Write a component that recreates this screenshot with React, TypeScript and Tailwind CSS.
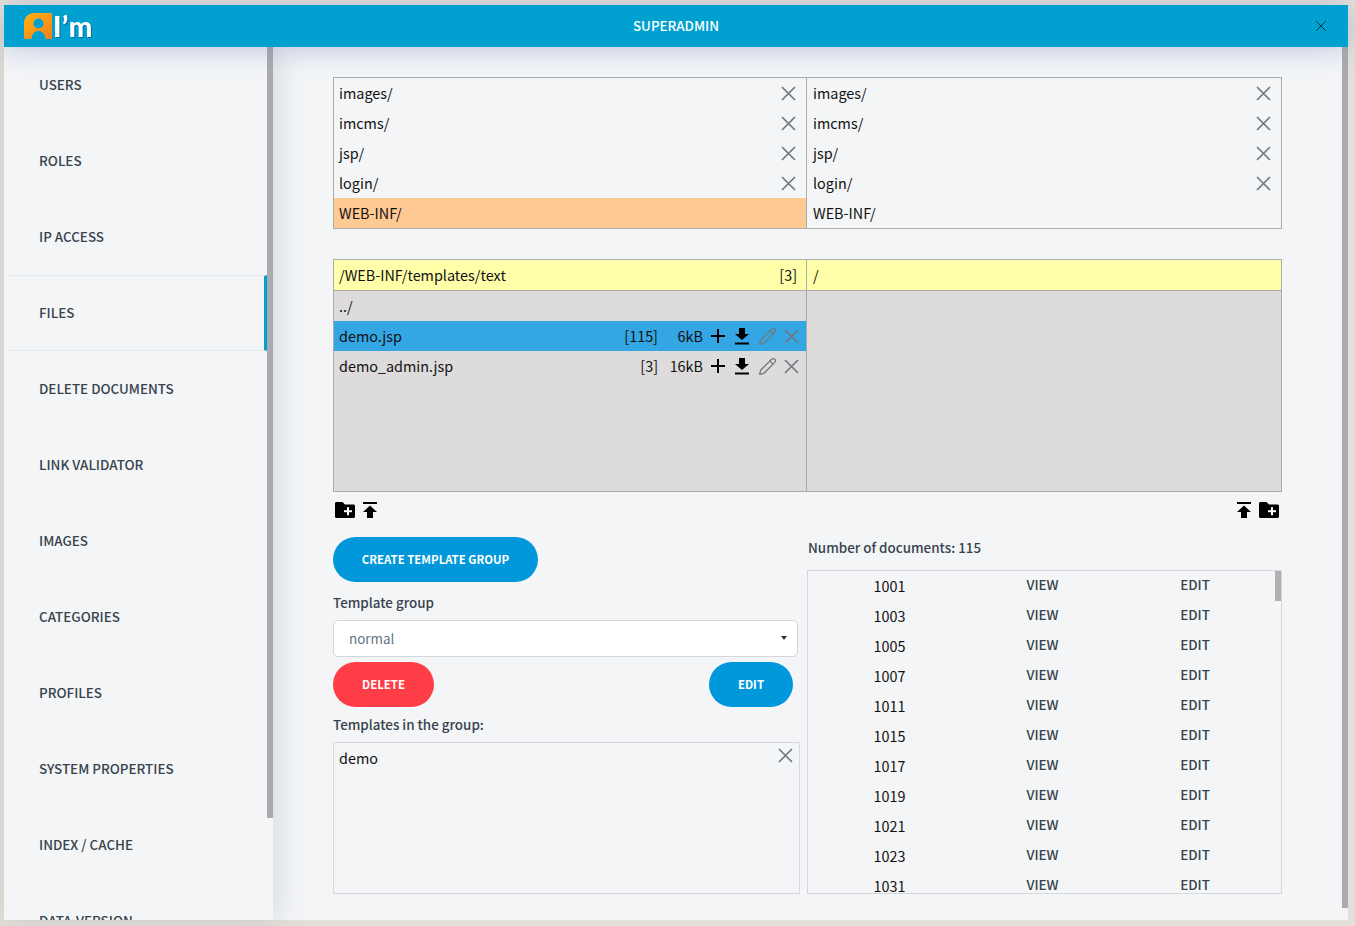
import { Pencil } from 'lucide-react';

const font = "font-['Noto_Sans_CJK_SC','Noto_Sans',sans-serif]";

const menu = [
	'USERS',
	'ROLES',
	'IP ACCESS',
	'FILES',
	'DELETE DOCUMENTS',
	'LINK VALIDATOR',
	'IMAGES',
	'CATEGORIES',
	'PROFILES',
	'SYSTEM PROPERTIES',
	'INDEX / CACHE',
	'DATA-VERSION',
];

const rootDirs = ['images/', 'imcms/', 'jsp/', 'login/'];
const docs = ['1001', '1003', '1005', '1007', '1011', '1015', '1017', '1019', '1021', '1023', '1031'];

function Logo() {
	return (
		<div className="flex items-center h-full pl-5">
			<svg width="28" height="26" viewBox="0 0 28 26" className="mt-[-1px]">
				<defs>
					<linearGradient id="logoGrad" x1="0" y1="0" x2="1" y2="1">
						<stop offset="0%" stopColor="#ffb310" />
						<stop offset="100%" stopColor="#f57f1e" />
					</linearGradient>
				</defs>
				<path d="M10 0H26.5C27.4 0 28 .6 28 1.5V26H21.5C21 21 18.5 18 14.5 18C10.5 18 8 21 7.5 26H1.5C.6 26 0 25.4 0 24.5V10C0 4.5 4.5 0 10 0Z" fill="url(#logoGrad)" />
				<circle cx="14.5" cy="10.5" r="5" fill="#00a1d0" />
				<path d="M10.5 26C10.8 22.5 12 20.5 14.5 20.5C17 20.5 18.2 22.5 18.5 26Z" fill="#00a1d0" />
			</svg>
			<span className="font-['Lato',sans-serif] font-black text-[28px] leading-[27px] text-white ml-px tracking-[0.5px] mt-[1px] drop-shadow-[1px_1px_0_rgba(0,60,90,0.5)]">
				I’m
			</span>
		</div>
	);
}

function CloseIcon({ size = 15, color = '#6f7a80', width = 1.7 }: { size?: number; color?: string; width?: number }) {
	return (
		<svg width={size} height={size} viewBox={`0 0 ${size} ${size}`} fill="none" stroke={color} strokeWidth={width} className="shrink-0">
			<path d={`M1 1L${size - 1} ${size - 1}M${size - 1} 1L1 ${size - 1}`} />
		</svg>
	);
}

function PlusIcon() {
	return (
		<svg width="14" height="14" viewBox="0 0 14 14" fill="#000" className="shrink-0">
			<rect x="0" y="6" width="14" height="2" />
			<rect x="6" y="0" width="2" height="14" />
		</svg>
	);
}

function DirColumn({ highlight, className }: { highlight: boolean; className: string }) {
	return (
		<div className={className}>
			{rootDirs.map((dir) => (
				<div key={dir} className={`h-[30px] flex items-center justify-between pr-[10px] ${highlight ? 'pl-[5px]' : 'pl-[6px]'}`}>
					<span>{dir}</span>
					<CloseIcon />
				</div>
			))}
			<div className={`h-[30px] flex items-center ${highlight ? 'pl-[5px] bg-[#ffc993]' : 'pl-[6px]'}`}>WEB-INF/</div>
		</div>
	);
}

function DownloadIcon() {
	return (
		<svg width="16" height="17" viewBox="0 0 16 17" fill="#000" className="shrink-0">
			<path d="M5 0H11V6H15L8 12L1 6H5Z" />
			<rect x="1" y="14.5" width="14" height="2" />
		</svg>
	);
}

function UploadIcon() {
	return (
		<svg width="14" height="16" viewBox="0 0 14 16" fill="#000">
			<rect x="0" y="0" width="14" height="2" />
			<path d="M7 3.5L14 10H10V16H4V10H0Z" />
		</svg>
	);
}

function FolderPlus() {
	return (
		<svg width="20" height="16" viewBox="0 0 20 16">
			<path d="M1.5 0H7.5L10 2.5H18.5C19.4 2.5 20 3.1 20 4V14.5C20 15.4 19.4 16 18.5 16H1.5C.6 16 0 15.4 0 14.5V1.5C0 .6.6 0 1.5 0Z" fill="#000" />
			<rect x="9" y="8.2" width="8" height="2" fill="#fff" />
			<rect x="12" y="5.2" width="2" height="8" fill="#fff" />
		</svg>
	);
}

function FileRow({ name, usage, size, selected }: { name: string; usage: string; size: string; selected?: boolean }) {
	return (
		<div className={`h-[30px] flex items-center pl-[5px] pr-[7px] ${selected ? 'bg-[#34a6e3]' : ''}`}>
			<span className="flex-1">{name}</span>
			<span>{usage}</span>
			<span className="w-[45px] text-right mr-[8px]">{size}</span>
			<PlusIcon />
			<span className="ml-[9px] mr-[8px] flex"><DownloadIcon /></span>
			<Pencil className="w-[19px] h-[19px] text-[#6f7a80]" strokeWidth={1.6} />
			<span className="ml-[7px] flex"><CloseIcon /></span>
		</div>
	);
}

export default function App() {
	return (
		<div className={`h-[926px] overflow-hidden bg-[#e3e0da] pt-[5px] pl-1 pr-[7px] pb-[6px] ${font}`}>
			<div className="h-full flex flex-col bg-[#f3f5f7]">
				{/* Top bar */}
				<header className="relative z-20 h-[42px] shrink-0 bg-[#00a1d0] shadow-[0_2px_28px_rgba(110,125,175,0.4)] flex items-center">
					<div className="w-[300px]"><Logo /></div>
					<div className="flex-1 text-center text-white text-[13.4px] font-medium -mt-[1px]">SUPERADMIN</div>
					<div className="w-[300px] flex justify-end pr-[21px] -mt-[1px]">
						<CloseIcon size={12} color="#04384c" width={1} />
					</div>
				</header>

				<div className="flex flex-1 min-h-0">
					{/* Sidebar */}
					<aside className="relative z-10 w-[269px] shrink-0 flex overflow-hidden bg-[#f3f5f7] shadow-[4px_0_28px_rgba(110,115,130,0.22)]">
						<nav className="w-[263px] shrink-0">
							{menu.map((item) => (
								<div
									key={item}
									className={`h-[76px] flex items-center pl-[35px] text-[13.4px] font-medium text-[#37424d] pb-[2px] ${
										item === 'FILES' ? 'border-y border-[#e9ecee] border-r-[3px] border-r-[#00a1d0]' : ''
									}`}
								>
									{item}
								</div>
							))}
						</nav>
						<div className="w-[6px] h-[771px] ml-auto shrink-0 bg-[#aaabae]" />
					</aside>

					{/* Main */}
					<main className="flex-1 flex min-w-0">
						<div className="flex-1 pl-[60px] pr-[60px] pt-[30px] text-[14.4px] leading-[30px] text-[#111] min-w-0">
							<div className="w-[949px]">
								<div className="flex h-[152px] border border-[#a9abad]">
									<DirColumn highlight className="w-[473px] shrink-0 border-r border-[#a9abad]" />
									<DirColumn highlight={false} className="flex-1 min-w-0" />
								</div>

								<div className="mt-[30px] h-[233px] border border-[#a9abad] bg-[#dddbdb] flex">
									<div className="w-[473px] shrink-0 border-r border-[#a9abad]">
										<div className="h-[31px] bg-[#ffffaa] border-b border-[#a9abad] flex justify-between items-center pl-[5px] pr-[9px]">
											<span>/WEB-INF/templates/text</span>
											<span>[3]</span>
										</div>
										<div className="h-[30px] flex items-center pl-[5px]">../</div>
										<FileRow name="demo.jsp" usage="[115]" size="6kB" selected />
										<FileRow name="demo_admin.jsp" usage="[3]" size="16kB" />
									</div>
									<div className="flex-1">
										<div className="h-[31px] bg-[#ffffaa] border-b border-[#a9abad] flex items-center pl-[6px]">/</div>
									</div>
								</div>

								<div className="h-[36px] flex items-center justify-between px-[2px] pb-[1px]">
									<div className="flex items-center gap-2">
										<FolderPlus />
										<UploadIcon />
									</div>
									<div className="flex items-center gap-2 pr-px">
										<UploadIcon />
										<FolderPlus />
									</div>
								</div>

								<div className="flex gap-[7px] mt-[9px]">
									{/* Left column */}
									<div className="w-[467px] shrink-0">
										<button className="h-[45px] w-[205px] pb-[2px] rounded-full bg-[#0098da] text-white text-[11.4px] font-bold">
											CREATE TEMPLATE GROUP
										</button>
										<div className="mt-[8px] h-[24px] leading-[24px] text-[13.4px] font-medium text-[#37424d]">Template group</div>
										<div className="mt-[6px] w-[465px] h-[37px] pb-[2px] rounded-[5px] border border-[#d3d6db] bg-white flex items-center justify-between pl-[15px] pr-[10px] text-[13.4px] text-[#5f7486]">
											<span>normal</span>
											<span className="w-0 h-0 border-x-[3px] border-x-transparent border-t-[4px] border-t-[#333]" />
										</div>
										<div className="mt-[5px] w-[460px] flex justify-between">
											<button className="h-[45px] w-[101px] pb-[2px] rounded-full bg-[#ff3d46] text-white text-[11.4px] font-bold">DELETE</button>
											<button className="h-[45px] w-[84px] pb-[2px] rounded-full bg-[#0098da] text-white text-[11.4px] font-bold">EDIT</button>
										</div>
										<div className="mt-[6px] h-[24px] leading-[22px] text-[13.4px] font-medium text-[#37424d]">Templates in the group:</div>
										<div className="mt-[5px] h-[152px] border border-[#d6d8dc] flex justify-between items-start pl-[5px] pr-[6px]">
											<span>demo</span>
											<span className="mt-[5px] flex"><CloseIcon /></span>
										</div>
									</div>

									{/* Right column */}
									<div className="w-[475px] shrink-0">
										<div className="h-[33px] -mt-[4px] ml-px leading-[28px] text-[13.4px] font-medium text-[#37424d]">Number of documents: 115</div>
										<div className="h-[324px] mt-[4px] border border-[#d6d8dc] flex overflow-hidden">
											<div className="flex-1 min-w-0">
												{docs.map((doc) => (
													<div key={doc} className="h-[30px] flex items-center">
														<span className="w-[158px] text-center pl-[5px]">{doc}</span>
														<span className="w-[153px] text-center text-[13.4px] font-medium text-[#37424d] -mt-[4px]">VIEW</span>
														<span className="w-[152px] text-center text-[13.4px] font-medium text-[#37424d] -mt-[4px]">EDIT</span>
													</div>
												))}
											</div>
											<div className="w-[6px] h-[30px] shrink-0 bg-[#b0b1b3]" />
										</div>
									</div>
								</div>
							</div>
						</div>
						<div className="w-[6px] h-[861px] shrink-0 bg-[#aaabae]" />
					</main>
				</div>
			</div>
		</div>
	);
}
